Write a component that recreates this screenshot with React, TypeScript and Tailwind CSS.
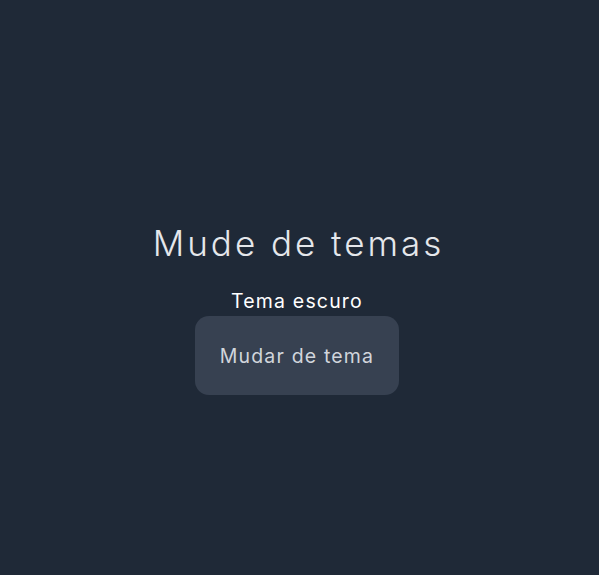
export default function App() {
  return (
    <div className="min-h-screen w-full bg-[#1f2937] flex flex-col items-center justify-center pr-[5px] font-['Inter',sans-serif]">
      <div className="flex flex-col items-center mt-[42px]">
        <h1 className="text-[35px] leading-[40px] font-light text-gray-200 tracking-[0.085em] pl-[3px]">
          Mude de temas
        </h1>
        <p className="mt-[26px] text-[19.5px] leading-[24px] text-white tracking-[0.06em]">Tema escuro</p>
        <button className="mt-[3px] w-[204px] h-[79px] pt-[4px] rounded-[14px] bg-[#374151] text-[19.5px] text-gray-300 tracking-[0.06em]">
          Mudar de tema
        </button>
      </div>
    </div>
  );
}
